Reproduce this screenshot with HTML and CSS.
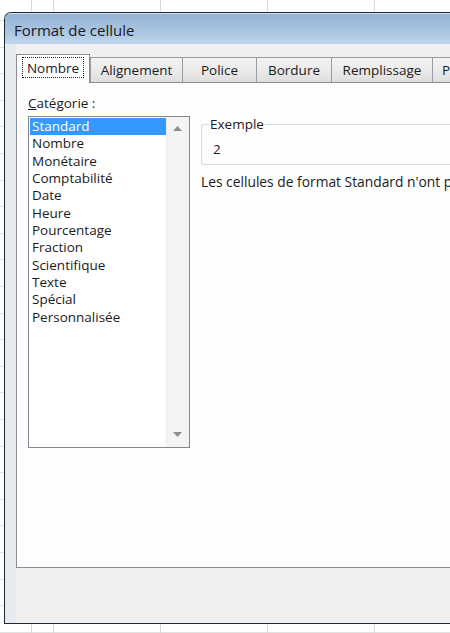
FILE: index.html
```html
<!DOCTYPE html>
<html lang="fr">
<head>
<meta charset="utf-8">
<title>Format de cellule</title>
<link rel="stylesheet" href="styles.css">
</head>
<body>
<div class="dialog">
  <div class="titlebar"><span class="title">Format de cellule</span></div>
  <div class="client">
    <div class="tabs">
      <div class="tab active w-nombre"><span class="focus">Nombre</span></div>
      <div class="tab w-align">Alignement</div>
      <div class="tab w-police">Police</div>
      <div class="tab w-bordure">Bordure</div>
      <div class="tab w-rempl">Remplissage</div>
      <div class="tab w-prot">Protection</div>
    </div>
    <div class="panel">
      <div class="leftcol">
        <div class="label"><span class="ul">C</span>atégorie :</div>
        <div class="listbox">
          <ul class="items">
            <li class="selected">Standard</li>
            <li>Nombre</li>
            <li>Monétaire</li>
            <li>Comptabilité</li>
            <li>Date</li>
            <li>Heure</li>
            <li>Pourcentage</li>
            <li>Fraction</li>
            <li>Scientifique</li>
            <li>Texte</li>
            <li>Spécial</li>
            <li>Personnalisée</li>
          </ul>
          <div class="scrollbar">
            <svg class="arrow" width="9" height="5" viewBox="0 0 9 5"><path d="M0 5 L4.5 0 L9 5 Z" fill="#8d8d8d"/></svg>
            <svg class="arrow" width="9" height="5" viewBox="0 0 9 5"><path d="M0 0 L4.5 5 L9 0 Z" fill="#8d8d8d"/></svg>
          </div>
        </div>
      </div>
      <div class="rightcol">
        <fieldset class="group">
          <legend>Exemple</legend>
          <div class="sample">2</div>
        </fieldset>
        <p class="desc">Les cellules de format Standard n'ont pas de format de nombre spécifique.</p>
      </div>
    </div>
  </div>
</div>
</body>
</html>
```
FILE: styles.css
```css
html, body {
  margin: 0;
  height: 100%;
  overflow: hidden;
}
body {
  padding: 12px 0 0 4px;
  box-sizing: border-box;
  font-family: "Open Sans", "Noto Sans", "DejaVu Sans", sans-serif;
  font-size: 13.5px;
  color: #1b1b1b;
  background-color: #ffffff;
  background-image:
    repeating-linear-gradient(90deg, #d8dadc 0 1px, transparent 1px 107px),
    repeating-linear-gradient(180deg, #dfe1e3 0 1px, transparent 1px 26.6px);
  background-position: 53px 0, 0 20px;
}
.dialog {
  width: 470px;
  height: 612px;
  box-sizing: border-box;
  border: 1px solid #1d2935;
  border-right: none;
  border-radius: 7px 0 0 0;
  overflow: hidden;
  display: flex;
  flex-direction: column;
  background: #eef1f4;
  box-shadow: inset 0 -2px 0 #a9ccd4;
}
.titlebar {
  height: 31px;
  flex: none;
  display: flex;
  align-items: center;
  padding-left: 9px;
  background: linear-gradient(180deg, #94b4d5 0%, #a8c4e1 55%, #c0d6ec 100%);
  border-top: 1px solid #cfe0f0;
  box-sizing: border-box;
}
.title {
  font-size: 15px;
  color: #1a1a1a;
  padding-top: 2px;
}
.client {
  flex: 1;
  padding: 10px 0 0 11px;
  background: linear-gradient(90deg, #e6ebf0 0 11px, #f0f0f0 11px);
}
.tabs {
  display: flex;
  align-items: flex-end;
  height: 28px;
  position: relative;
  z-index: 1;
}
.tab {
  flex: none;
  box-sizing: border-box;
  height: 25px;
  border: 1px solid #9a9ca2;
  border-bottom: none;
  border-right: none;
  background: linear-gradient(180deg, #f4f4f4 0%, #ebebeb 50%, #dedede 100%);
  display: flex;
  align-items: center;
  justify-content: center;
  white-space: nowrap;
  overflow: hidden;
  padding-bottom: 1px;
}
.tab.active {
  height: 29px;
  margin-bottom: -1px;
  background: #ffffff;
  border: 1px solid #898c95;
  border-bottom: none;
  padding-bottom: 4px;
}
.w-nombre { width: 74px; }
.w-align { width: 92px; }
.w-police { width: 74px; }
.w-bordure { width: 75px; }
.w-rempl { width: 101px; }
.w-prot { width: 90px; justify-content: flex-start; padding-left: 9px; }
.focus {
  display: inline-block;
  border: 1px dotted #222;
  padding: 0 4px;
  height: 21px;
  line-height: 20px;
  box-sizing: border-box;
}
.panel {
  height: 486px;
  box-sizing: border-box;
  border: 1px solid #898c95;
  border-right: none;
  background: #fefefe;
  display: flex;
  gap: 11px;
  padding-left: 11px;
}
.leftcol {
  width: 162px;
  flex: none;
  padding-top: 12px;
}
.label {
  line-height: 17px;
  height: 17px;
  margin-bottom: 4px;
}
.ul { text-decoration: underline; }
.listbox {
  box-sizing: border-box;
  width: 162px;
  height: 332px;
  border: 1px solid #828790;
  background: #ffffff;
  display: flex;
}
.items {
  list-style: none;
  margin: 0;
  padding: 1px 0 0 1px;
  flex: 1;
}
.items li {
  height: 17.35px;
  line-height: 17px;
  padding-left: 2px;
  white-space: nowrap;
}
.items li.selected {
  background: #3399ff;
  color: #ffffff;
}
.scrollbar {
  width: 23px;
  flex: none;
  background: linear-gradient(90deg, #ebebeb 0 1px, #f4f4f4 1px);
  display: flex;
  flex-direction: column;
  justify-content: space-between;
  align-items: center;
  padding: 9px 0 10px;
  box-sizing: border-box;
}
.arrow { display: block; }
.rightcol {
  width: 300px;
  flex: none;
  padding-top: 33px;
}
.group {
  margin: 0;
  border: 1px solid #d2dbe2;
  border-right: none;
  border-radius: 3px 0 0 3px;
  padding: 8px 0 6px 11px;
  min-width: 0;
}
.group legend {
  padding: 0 1px;
  margin-left: -4px;
  line-height: 17px;
}
.sample {
  line-height: 17px;
}
.desc {
  margin: 8px 0 0;
  font-size: 13.8px;
  line-height: 17px;
  white-space: nowrap;
}
```
